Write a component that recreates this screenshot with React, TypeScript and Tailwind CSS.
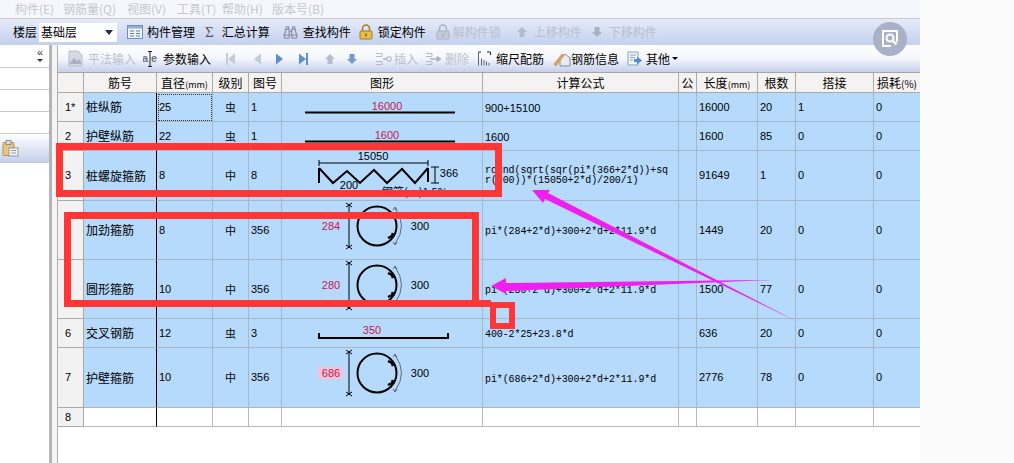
import type { ReactNode } from "react";
import { Binoculars } from "lucide-react";

const cjk = "font-['Noto_Sans_CJK_SC','Liberation_Sans',sans-serif]";
const red = "#c8174f";

const menus = [
    { label: "构件(E)", width: 48 },
    { label: "钢筋量(Q)", width: 64 },
    { label: "视图(V)", width: 50 },
    { label: "工具(T)", width: 45 },
    { label: "帮助(H)", width: 50 },
    { label: "版本号(B)", width: 60 },
];

function TableIcon() {
    return (
        <svg width="16" height="14" viewBox="0 0 16 14">
            <rect x="0.5" y="0.5" width="15" height="13" fill="#eef3fb" stroke="#6f8fb8" />
            <rect x="1" y="1" width="14" height="2.5" fill="#8fb0d8" />
            <path d="M3 6h4M3 8.5h4M3 11h4M9 6h4M9 8.5h4M9 11h4" stroke="#6d7f98" />
        </svg>
    );
}

function LockIcon({ disabled }: { disabled?: boolean }) {
    const body = disabled ? "#c3cad8" : "#e8bd4c";
    const line = disabled ? "#aab3c4" : "#a87a20";
    return (
        <svg width="14" height="16" viewBox="0 0 14 16">
            <path d="M3.5 7V4.5a3.5 3.5 0 0 1 7 0V7" fill="none" stroke={line} strokeWidth="1.5" />
            <rect x="1" y="7" width="12" height="8" rx="1" fill={body} stroke={line} />
            <rect x="6" y="9.5" width="2" height="3" fill={line} />
        </svg>
    );
}

function ArrowTool({ dir, color }: { dir: "up" | "down"; color: string }) {
    const d = dir === "up" ? "M5 1l5 5H7.5v5h-5V6H0z" : "M2.5 1h5v5H10l-5 5-5-5h2.5z";
    return (
        <svg width="10" height="12" viewBox="0 0 10 12">
            <path d={d} fill={color} />
        </svg>
    );
}

function Nav({ flip, bar, color }: { flip?: boolean; bar?: boolean; color: string }) {
    return (
        <svg width="10" height="14" viewBox="0 0 10 14" className={flip ? "-scale-x-100" : ""}>
            <path d="M1 1.5l7 5.5-7 5.5z" fill={color} />
            {bar && <rect x="8" y="1" width="2" height="12" fill={color} />}
        </svg>
    );
}

function PlanIcon() {
    return (
        <svg width="17" height="17" viewBox="0 0 17 17">
            <path d="M2 1h9l4 4v11H2z" fill="#d4d9e4" stroke="#b6bdcc" />
            <path d="M2 14l5-6 3 3 2-2 3 5z" fill="#aab2c2" />
        </svg>
    );
}

function ParamIcon() {
    return (
        <svg width="14" height="18" viewBox="0 0 14 18">
            <text x="-1" y="12" fontFamily="Liberation Sans" fontWeight="700" fontSize="11" fill="#6d7480">a</text>
            <text x="8" y="12" fontFamily="Liberation Sans" fontWeight="700" fontSize="11" fill="#6d7480">e</text>
            <path d="M5 1.5h4M5 16.5h4M7 1.5v15" stroke="#222" fill="none" />
        </svg>
    );
}

function InsertIcon({ remove }: { remove?: boolean }) {
    return (
        <svg width="17" height="14" viewBox="0 0 17 14">
            <path d="M1 1.5h6M7 1.5v3M7 4.5H1M1 9.5h6M7 9.5v3M7 12.5H1" stroke="#b3bac8" fill="none" />
            <path d={remove ? "M5 7h8" : "M8 7h4"} stroke="#aab2c2" strokeWidth="1.5" />
            <path d={remove ? "M12 4.5l4 2.5-4 2.5z" : "M12 5h4v4h-4z"} fill={remove ? "#aab2c2" : "none"} stroke="#aab2c2" />
        </svg>
    );
}

function ScaleIcon() {
    return (
        <svg width="13" height="15" viewBox="0 0 13 15">
            <path d="M0.5 1v13.5M3.5 7.5v7M6 9v5.5M8.5 10.5v4M11 12v2.5" stroke="#5d6670" />
            <path d="M0.5 1H3M9 1h3.5v3" stroke="#222" fill="none" />
        </svg>
    );
}

function InfoIcon() {
    return (
        <svg width="18" height="16" viewBox="0 0 18 16">
            <path d="M7 15V7l5-4 5 4v8z" fill="#e8ecf4" stroke="#7c8aa0" />
            <path d="M1 13L9 3l2 1.5L3 15z" fill="#e0a257" stroke="#b7783a" strokeWidth="0.5" />
        </svg>
    );
}

function OtherIcon() {
    return (
        <svg width="15" height="15" viewBox="0 0 15 15">
            <path d="M1 1h10v13H1z" fill="#f2f5fa" stroke="#8ba0bb" />
            <path d="M3 4h6M3 6.5h5M3 9h3" stroke="#8ba0bb" />
            <path d="M7 8h3V5.5l5 4-5 4V11H7z" fill="#4f8fd6" />
        </svg>
    );
}

function ClipIcon() {
    return (
        <svg width="17" height="17" viewBox="0 0 17 17">
            <rect x="1" y="2.5" width="11" height="13" rx="1" fill="#e8c67d" stroke="#b69148" />
            <rect x="4" y="0.5" width="5" height="4" fill="#d7dbe2" stroke="#8b8f98" />
            <rect x="7" y="8" width="9" height="8" fill="#f5f6fa" stroke="#8d95a6" />
            <path d="M9 10.5h5M9 13h5" stroke="#8d95a6" />
        </svg>
    );
}

function Tool({ icon, label, disabled, gap = 5, left = 0 }: { icon?: ReactNode; label: string; disabled?: boolean; gap?: number; left?: number }) {
    return (
        <div className="flex items-center shrink-0" style={{ marginLeft: left, gap }}>
            {icon}
            <span className={disabled ? "text-[#b9c0cf]" : "text-black"}>{label}</span>
        </div>
    );
}

function Straight({ text }: { text: string }) {
    return (
        <svg width="200" height="28" className="block">
            <text x="105" y="17" textAnchor="middle" fontSize="11" fill={red} fontFamily="Liberation Sans">{text}</text>
            <line x1="23" x2="173" y1="19.5" y2="19.5" stroke="#000" strokeWidth="2" />
        </svg>
    );
}

function Spiral() {
    const pts = [[319, 168], [333, 183], [347, 171], [360, 183], [374, 170], [387, 183], [402, 169], [415, 183], [428, 168]];
    const zig = pts.map(([x, y]) => `${x - 282},${y - 151}`).join(" ");
    return (
        <svg width="200" height="49" className="block">
            <g fontFamily="Liberation Sans" fontSize="11" fill="#000">
                <text x="91" y="9" textAnchor="middle">15050</text>
                <text x="67" y="38" textAnchor="middle">200</text>
                <text x="167" y="26" textAnchor="middle">366</text>
                <text x="100" y="45" fontFamily="Noto Sans CJK SC">钢筋(·)1.5%</text>
            </g>
            <path d="M37 12H146M37 9v6M146 9v6M153 16v16M149 16h8M149 32h8" stroke="#000" fill="none" />
            <polyline points={zig} fill="none" stroke="#000" strokeWidth="2" />
            <line x1="37" x2="37" y1="17" y2="32" stroke="#000" strokeWidth="2" />
            <line x1="146" x2="146" y1="17" y2="31" stroke="#000" strokeWidth="2" />
        </svg>
    );
}

function Hoop({ height, cy, top, bottom, h, w, hooks, shaded }: { height: number; cy: number; top: number; bottom: number; h: string; w: string; hooks: "one" | "two"; shaded?: boolean }) {
    return (
        <svg width="200" height={height} className="block">
            {shaded && <rect x="36" y={cy - 6} width="25" height="12" fill="#f3c4d8" />}
            <g fontFamily="Liberation Sans" fontSize="11">
                <text x="49" y={cy + 4} textAnchor="middle" fill={red}>{h}</text>
                <text x="138" y={cy + 4} textAnchor="middle" fill="#000">{w}</text>
            </g>
            <path d={`M67 ${top}V${bottom}M64 ${top - 2}l6 4M70 ${top - 2}l-6 4M64 ${bottom - 2}l6 4M70 ${bottom - 2}l-6 4`} stroke="#000" fill="none" />
            <circle cx="95" cy={cy} r="19.5" fill="none" stroke="#000" strokeWidth="2" />
            <path d={`M113 ${cy - 18}Q126 ${cy} 113 ${cy + 18}M111 ${cy - 16}l2 -3 2 3M111 ${cy + 16}l2 3 2 -3`} fill="none" stroke="#223" strokeWidth="0.6" />
            <path d={`M106 ${cy + 12}l4 -2 1 -3`} fill="none" stroke="#000" strokeWidth="2.5" />
            {hooks === "two" && <path d={`M106 ${cy - 12}l4 2 1 3`} fill="none" stroke="#000" strokeWidth="2.5" />}
        </svg>
    );
}

function Cross() {
    return (
        <svg width="200" height="28" className="block">
            <text x="90" y="15" textAnchor="middle" fontSize="11" fill={red} fontFamily="Liberation Sans">350</text>
            <path d="M37 14v5H166v-5" fill="none" stroke="#000" strokeWidth="2" />
        </svg>
    );
}

const mono = "font-['Liberation_Mono',monospace] text-[10px] tracking-[-0.1px]";

const rows: { h: number; id: string; name: string; dia: string; fig: string; shape: ReactNode; formula: ReactNode; len: string; qty: string; lap: string; loss: string }[] = [
    { h: 29, id: "1*", name: "桩纵筋", dia: "25", fig: "1", shape: <Straight text="16000" />, formula: <span className="font-['Liberation_Sans'] text-[11px]">900+15100</span>, len: "16000", qty: "20", lap: "1", loss: "0" },
    { h: 29, id: "2", name: "护壁纵筋", dia: "22", fig: "1", shape: <Straight text="1600" />, formula: <span className="font-['Liberation_Sans'] text-[11px]">1600</span>, len: "1600", qty: "85", lap: "0", loss: "0" },
    { h: 50, id: "3", name: "桩螺旋箍筋", dia: "8", fig: "8", shape: <Spiral />, formula: <span className={`${mono} leading-[10px] block`}>round(sqrt(sqr(pi*(366+2*d))+sq<br />r(200))*(15050+2*d)/200/1)</span>, len: "91649", qty: "1", lap: "0", loss: "0" },
    { h: 59, id: "4", name: "加劲箍筋", dia: "8", fig: "356", shape: <Hoop height={58} cy={25} top={4} bottom={46} h="284" w="300" hooks="one" />, formula: <span className={mono}>pi*(284+2*d)+300+2*d+2*11.9*d</span>, len: "1449", qty: "20", lap: "0", loss: "0" },
    { h: 59, id: "5", name: "圆形箍筋", dia: "10", fig: "356", shape: <Hoop height={58} cy={25} top={3} bottom={48} h="280" w="300" hooks="two" />, formula: <span className={mono}>pi*(280+2*d)+300+2*d+2*11.9*d</span>, len: "1500", qty: "77", lap: "0", loss: "0" },
    { h: 29, id: "6", name: "交叉钢筋", dia: "12", fig: "3", shape: <Cross />, formula: <span className={mono}>400-2*25+23.8*d</span>, len: "636", qty: "20", lap: "0", loss: "0" },
    { h: 60, id: "7", name: "护壁箍筋", dia: "10", fig: "356", shape: <Hoop height={59} cy={25} top={4} bottom={46} h="686" w="300" hooks="two" shaded />, formula: <span className={mono}>pi*(686+2*d)+300+2*d+2*11.9*d</span>, len: "2776", qty: "78", lap: "0", loss: "0" },
];

const cols = [26, 73, 56, 36, 33, 201, 196, 18, 61, 38, 78, 46];
const headers: ReactNode[] = [
    "", "筋号", <>直径<span className="text-[9px]">(mm)</span></>, "级别", "图号", "图形", "计算公式", "公", <>长度<span className="text-[9px]">(mm)</span></>, "根数", "搭接", <>损耗<span className="text-[10px]">(%)</span></>,
];

const th = "border-r border-b border-[#aaaaaa] bg-[#f4f3f1] font-normal p-0 text-center whitespace-nowrap overflow-hidden";
const td = "border-r border-b border-[#a9b8c8] p-0 pl-[2px] align-middle bg-[#b5dafc] overflow-hidden";
const num = "font-['Liberation_Sans'] text-[11px]";

function Grid() {
    return (
        <table className={`table-fixed border-separate border-spacing-0 w-[862px] text-[12px] text-black ${cjk}`}>
            <colgroup>
                {cols.map((w, i) => <col key={i} style={{ width: w }} />)}
            </colgroup>
            <thead>
                <tr className="h-[20px]">
                    {headers.map((h, i) => <th key={i} className={`${th} ${i === 11 ? "border-r-0" : ""}`}>{h}</th>)}
                </tr>
            </thead>
            <tbody>
                {rows.map((r, i) => (
                    <tr key={r.id} style={{ height: r.h }}>
                        <td className="border-r border-b border-[#aaaaaa] bg-[#f2f2f2] p-0 pl-[7px] font-['Liberation_Sans'] text-[11px]">{r.id}</td>
                        <td className={`${td} border-r-black`}>{r.name}</td>
                        <td className={`${td} ${num} ${i === 0 ? "bg-[#a3cff4] outline-1 -outline-offset-2 outline-dotted outline-[#333]" : ""}`}>{r.dia}</td>
                        <td className={`${td} text-center !pl-0 text-[11px]`}>{i === 0 || i === 1 || i === 5 ? "虫" : "中"}</td>
                        <td className={`${td} ${num}`}>{r.fig}</td>
                        <td className={`${td} !pl-0`}>{r.shape}</td>
                        <td className={td}>{r.formula}</td>
                        <td className={td}></td>
                        <td className={`${td} ${num}`}>{r.len}</td>
                        <td className={`${td} ${num}`}>{r.qty}</td>
                        <td className={`${td} ${num}`}>{r.lap}</td>
                        <td className={`${td} ${num} border-r-0`}>{r.loss}</td>
                    </tr>
                ))}
                <tr className="h-[19px]">
                    <td className="border-r border-b border-[#aaaaaa] bg-[#f2f2f2] p-0 pl-[7px] font-['Liberation_Sans'] text-[11px]">8</td>
                    {cols.slice(1).map((_, i) => (
                        <td key={i} className={`border-b border-[#b9b9b9] bg-white p-0 ${i === 0 ? "border-r border-r-black" : ""} ${i === 10 ? "" : "border-r"}`}></td>
                    ))}
                </tr>
            </tbody>
        </table>
    );
}

function Annotations() {
    return (
        <>
            {/* red marker boxes drawn over the screenshot */}
            <div className="absolute left-[56px] top-[143px] w-[446px] h-[54px] border-[7px] border-[#ff3636]" />
            <div className="absolute left-[64px] top-[212px] w-[415px] h-[95px] border-[7px] border-[#ff3636]" />
            <div className="absolute left-[479px] top-[300px] w-[12px] h-[7px] bg-[#ff3636]" />
            <div className="absolute left-[490px] top-[302px] w-[25px] h-[27px] border-[6px] border-[#ff3636]" />
            <svg width="1014" height="463" className="absolute left-0 top-0 pointer-events-none">
                <polygon points="532,190 550,190 548,193 798,322 545,199 543,203" fill="#f01ff0" />
                <polygon points="491,286 506,278 506,283 772,280 506,291 506,294" fill="#f01ff0" />
            </svg>
            <div className="absolute left-[873px] top-[22px] w-[34px] h-[34px] rounded-full bg-[#a9b1c9] flex items-center justify-center">
                <svg width="20" height="20" viewBox="0 0 20 20">
                    <path d="M17 13V2H3v15h8" fill="none" stroke="#fff" strokeWidth="2" />
                    <circle cx="10" cy="9" r="3.5" fill="none" stroke="#fff" strokeWidth="2" />
                    <path d="M12.5 11.5l4 4" stroke="#fff" strokeWidth="2.5" />
                </svg>
            </div>
        </>
    );
}

function App() {
    return (
        <div className={`relative w-[1014px] h-[463px] overflow-hidden bg-[#fbfbfb] text-[12px] leading-none ${cjk}`}>
            <div className="w-[920px] h-full bg-white flex flex-col">
                <div className="h-[19px] shrink-0 bg-[#f5f7fd] border-b border-[#c8cccc] flex items-center pl-[15px] text-[#c4c8d0]">
                    {menus.map((m) => <span key={m.label} className="shrink-0" style={{ width: m.width }}>{m.label}</span>)}
                </div>
                <div className="h-[26px] shrink-0 bg-gradient-to-b from-[#e6ebf8] to-[#c4d0ee] flex items-center pl-[13px]">
                    <span>楼层</span>
                    <div className="ml-[2px] w-[78px] h-[19px] bg-white flex items-center justify-between pl-[2px] pr-[4px]">
                        <span>基础层</span>
                        <span className="w-0 h-0 border-x-[4px] border-x-transparent border-t-[5px] border-t-[#1c2b50]" />
                    </div>
                    <Tool left={10} gap={4} icon={<TableIcon />} label="构件管理" />
                    <Tool left={10} gap={8} icon={<span className="font-['Liberation_Serif'] text-[15px] text-[#555]">Σ</span>} label="汇总计算" />
                    <Tool left={13} gap={5} icon={<Binoculars size={15} color="#8d93a6" />} label="查找构件" />
                    <Tool left={8} gap={5} icon={<LockIcon />} label="锁定构件" />
                    <Tool left={10} gap={3} disabled icon={<LockIcon disabled />} label="解构件锁" />
                    <Tool left={16} gap={7} disabled icon={<ArrowTool dir="up" color="#b5bdcc" />} label="上移构件" />
                    <Tool left={10} gap={7} disabled icon={<ArrowTool dir="down" color="#a9b1c2" />} label="下移构件" />
                </div>
                <div className="flex-1 flex min-h-0">
                    <div className="w-[49px] shrink-0 flex flex-col bg-white">
                        <div className="h-[23px] border-b border-[#c9c9c9] flex flex-col items-end pr-[6px] pt-[2px] text-[#333]">
                            <span className="font-['Liberation_Sans'] text-[11px] leading-[10px]">«</span>
                            <span className="w-0 h-0 mt-[2px] border-x-[3px] border-x-transparent border-t-[3px] border-t-[#333]" />
                        </div>
                        <div className="h-[22px] border-b border-[#c9c9c9]" />
                        <div className="h-[22px] border-b border-[#c9c9c9]" />
                        <div className="h-[22px] border-b border-[#c9c9c9]" />
                        <div className="h-[29px] bg-gradient-to-b from-white to-[#c5d0ec] border-b border-[#c9c9c9] flex items-end pl-[2px] pb-[5px]">
                            <ClipIcon />
                        </div>
                    </div>
                    <div className="w-[3px] shrink-0 bg-[#b4b4b4]" />
                    <div className="w-[5px] shrink-0 bg-[#f4f4f4]" />
                    <div className="w-[1px] shrink-0 bg-[#b0b0b0]" />
                    <div className="flex-1 min-w-0 flex flex-col">
                        <div className="h-[28px] shrink-0 bg-gradient-to-b from-white via-[#f4f6fc] to-[#c5d0ee] border-b border-[#a6a6a6] flex items-center pl-[9px] text-[12px]">
                            <Tool disabled gap={4} icon={<PlanIcon />} label="平法输入" />
                            <Tool left={7} gap={6} icon={<ParamIcon />} label="参数输入" />
                            <div className="ml-[15px] w-[10px]"><Nav flip bar color="#c3cad8" /></div>
                            <div className="ml-[16px] w-[10px]"><Nav flip color="#c3cad8" /></div>
                            <div className="ml-[13px] w-[10px]"><Nav color="#5f8fd0" /></div>
                            <div className="ml-[13px] w-[10px]"><Nav bar color="#5f8fd0" /></div>
                            <div className="ml-[17px]"><ArrowTool dir="up" color="#b5bdcc" /></div>
                            <div className="ml-[12px]"><ArrowTool dir="down" color="#6f9ad6" /></div>
                            <Tool left={18} gap={2} disabled icon={<InsertIcon />} label="插入" />
                            <Tool left={7} gap={3} disabled icon={<InsertIcon remove />} label="删除" />
                            <Tool left={9} gap={5} icon={<ScaleIcon />} label="缩尺配筋" />
                            <Tool left={9} gap={0} icon={<InfoIcon />} label="钢筋信息" />
                            <Tool left={8} gap={4} icon={<OtherIcon />} label="其他" />
                            <span className="ml-[2px] w-0 h-0 border-x-[3px] border-x-transparent border-t-[3px] border-t-black" />
                        </div>
                        <Grid />
                    </div>
                </div>
            </div>
            <Annotations />
        </div>
    );
}

export default App
